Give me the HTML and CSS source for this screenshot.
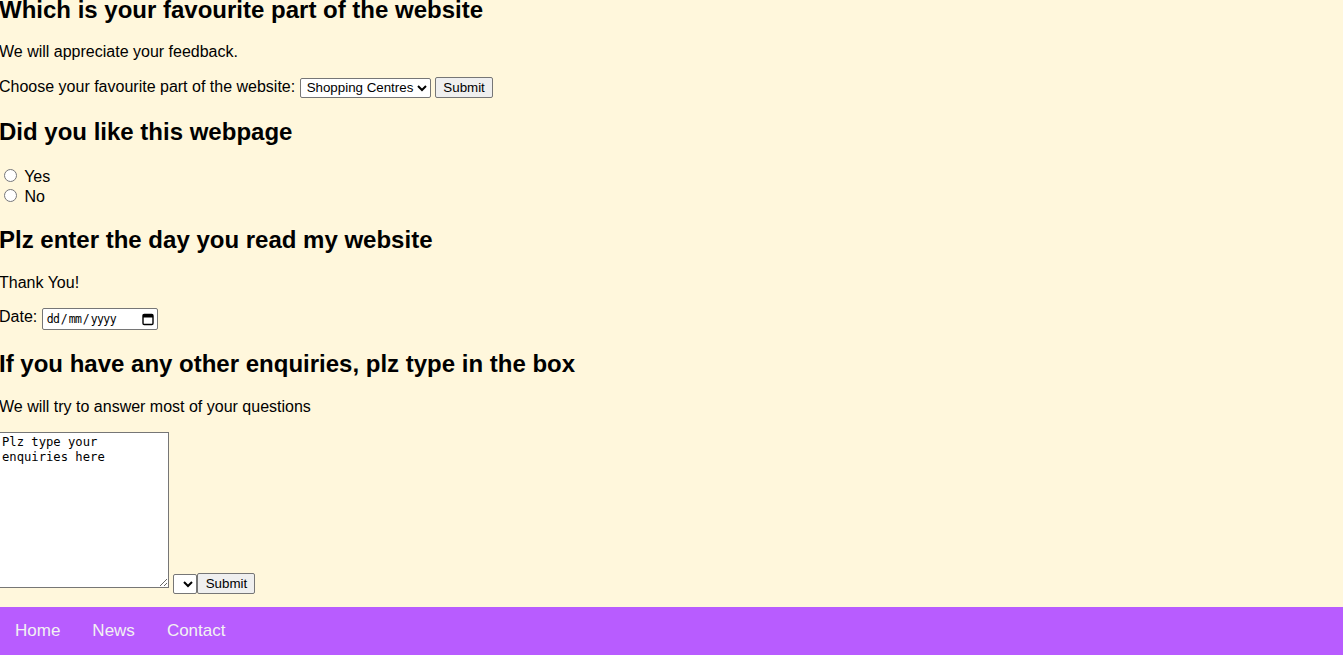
FILE: index.html
```html
<!DOCTYPE html>
<html lang="en">
<head>
<meta charset="utf-8">
<title>Feedback</title>
<link rel="stylesheet" href="styles.css">
</head>
<body>
<main class="page">
  <h2 class="first">Which is your favourite part of the website</h2>
  <p>We will appreciate your feedback.</p>
  <form class="line">
    <label for="fav">Choose your favourite part of the website:</label>
    <select id="fav" class="fav-select">
      <option>Shopping Centres</option>
      <option>Restaurants</option>
      <option>Parks</option>
    </select>
    <button type="button" class="btn">Submit</button>
  </form>

  <h2>Did you like this webpage</h2>
  <div class="radios">
    <input type="radio" name="like" id="yes" class="radio"> <label for="yes">Yes</label><br>
    <input type="radio" name="like" id="no" class="radio"> <label for="no">No</label>
  </div>

  <h2>Plz enter the day you read my website</h2>
  <p>Thank You!</p>
  <p class="line">Date: <span class="date-box"><span class="date-text">dd<span class="sl">/</span>mm<span class="sl">/</span>yyyy</span><svg class="cal" width="12" height="13" viewBox="0 0 12 13"><rect x="1" y="1.5" width="10" height="10" rx="1.2" fill="none" stroke="#000" stroke-width="1.4"/><rect x="1" y="1.5" width="10" height="3" fill="#000"/></svg></span></p>

  <h2>If you have any other enquiries, plz type in the box</h2>
  <p>We will try to answer most of your questions</p>
  <form class="enquiry">
    <textarea class="box">Plz type your enquiries here</textarea>
    <select class="mini-select"><option></option></select><button type="button" class="btn">Submit</button>
  </form>
</main>
<nav class="topnav">
  <a href="#">Home</a>
  <a href="#">News</a>
  <a href="#">Contact</a>
</nav>
</body>
</html>
```
FILE: styles.css
```css
html, body {
  margin: 0;
  padding: 0;
}
body {
  background: #fff7dc;
  color: #000;
  font-family: "Liberation Sans", Arial, sans-serif;
  font-size: 16px;
  margin-left: -1px;
}
.page {
  margin-top: -4px;
}
h2 {
  font-size: 24px;
  font-weight: bold;
  margin: 20px 0;
}
h2.first {
  margin-top: 0;
  margin-bottom: 19px;
}
p {
  margin: 16px 0;
}
.line {
  margin: 16px 0;
}
select, button, textarea {
  font-family: "Liberation Sans", Arial, sans-serif;
  font-size: 13.33px;
  margin: 0;
}
.fav-select {
  width: 131px;
  height: 20px;
  background: #fff;
  border: 1px solid #767676;
  border-radius: 2px;
  color: #000;
  padding: 0 0 0 2px;
}
.btn {
  height: 21px;
  padding: 1px 6px;
  background: #efefef;
  border: 1px solid #767676;
  border-radius: 2px;
  color: #000;
}
.line .btn {
  width: 58px;
}
.radios {
  margin: 0;
}
.radio {
  margin: 3px 3px 0 5px;
  width: 13px;
  height: 13px;
  vertical-align: baseline;
}
.date-box {
  display: inline-flex;
  align-items: center;
  justify-content: space-between;
  box-sizing: border-box;
  width: 116px;
  height: 22px;
  padding: 0 3px 0 4px;
  background: #fff;
  border: 1px solid #767676;
  border-radius: 2px;
  vertical-align: -1px;
}
.date-text {
  font-family: "DejaVu Sans Mono", "Liberation Mono", monospace;
  font-size: 11.5px;
  letter-spacing: -0.6px;
  color: #000;
}
.sl {
  margin: 0 1.5px;
}
.cal {
  display: block;
}
.enquiry {
  margin: 16px 0 0;
}
.box {
  box-sizing: border-box;
  width: 170px;
  height: 156px;
  padding: 2px;
  border: 1px solid #767676;
  background: #fff;
  font-family: "DejaVu Sans Mono", "Liberation Mono", monospace;
  font-size: 12.2px;
  line-height: 15px;
  color: #000;
  resize: both;
  vertical-align: baseline;
}
.mini-select {
  width: 24px;
  height: 20px;
  background: #fff;
  border: 1px solid #767676;
  border-radius: 2px;
}
.enquiry .btn {
  width: 58px;
}
.topnav {
  display: flex;
  background: #b85cff;
  margin-top: 13px;
}
.topnav a {
  display: block;
  color: #f2f2f2;
  text-decoration: none;
  font-size: 17px;
  padding: 14px 16px;
  line-height: 20px;
}
```
